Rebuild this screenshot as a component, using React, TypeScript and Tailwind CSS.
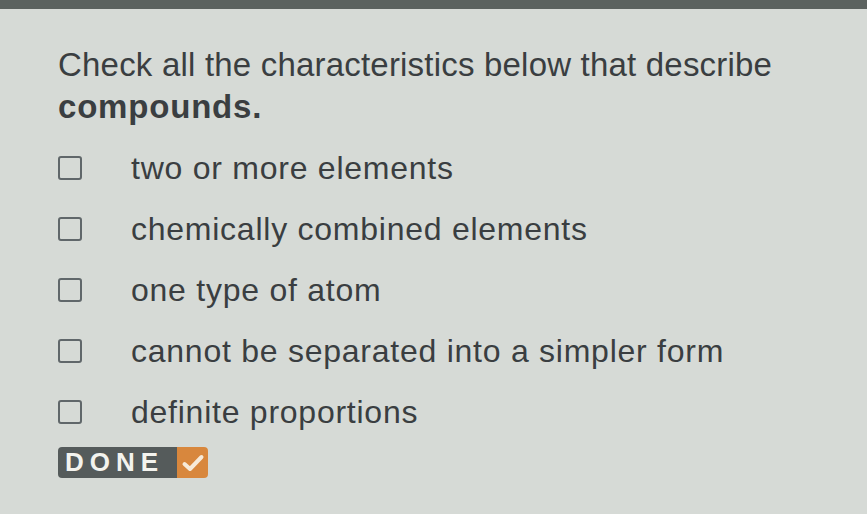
export default function App() {
  const options = [
    'two or more elements',
    'chemically combined elements',
    'one type of atom',
    'cannot be separated into a simpler form',
    'definite proportions',
  ];

  return (
    <div className="w-[867px] h-[514px] overflow-hidden bg-[#d6dad6] font-['Liberation_Sans',Arial,sans-serif] text-[#3a3e41]">
      <div className="h-[9px] bg-[#5b625f]" />
      <div className="pl-[58px] pt-[35px]">
        <h1 className="text-[33px] leading-[42px] tracking-[0.2px]">
          Check all the characteristics below that describe
          <br />
          <span className="font-bold tracking-[0.8px]">compounds.</span>
        </h1>
        <ul className="mt-[26px] flex flex-col gap-[33px]">
          {options.map((opt) => (
            <li key={opt} className="flex items-center h-[28px]">
              <span className="w-[24px] h-[24px] rounded-[3px] border-2 border-[#60676a] shrink-0" />
              <span className="ml-[49px] text-[32px] leading-[28px] tracking-[0.75px]">{opt}</span>
            </li>
          ))}
        </ul>
        <button className="mt-[21px] flex items-stretch h-[31px] rounded-[4px] overflow-hidden">
          <span className="w-[119px] bg-[#555b5b] text-[#f3f3ee] font-bold text-[26px] tracking-[6px] pl-[7px] flex items-center">
            DONE
          </span>
          <span className="bg-[#d8873d] w-[31px] flex items-center justify-center">
            <svg width="24" height="20" viewBox="0 0 24 20">
              <path d="M3.5 11 L9 16 L20.5 4" fill="none" stroke="#f7ead8" strokeWidth="4" strokeLinecap="round" strokeLinejoin="round" />
            </svg>
          </span>
        </button>
      </div>
    </div>
  );
}
